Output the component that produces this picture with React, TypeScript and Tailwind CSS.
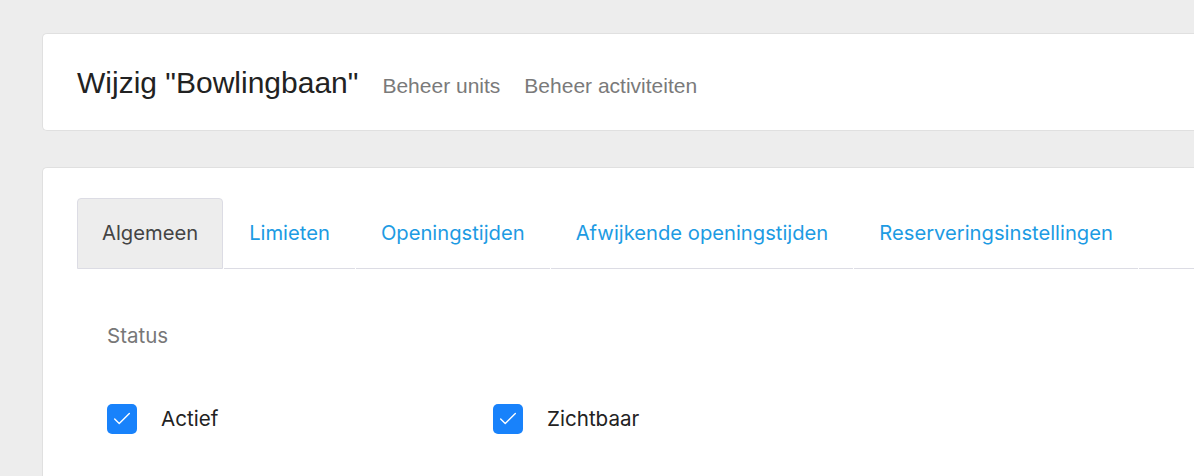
import { Check } from "lucide-react";

const TABS = [
  "Algemeen",
  "Limieten",
  "Openingstijden",
  "Afwijkende openingstijden",
  "Reserveringsinstellingen",
];

function Checkbox({ label }: { label: string }) {
  return (
    <label className="flex items-center gap-6">
      <span className="flex h-[30px] w-[30px] items-center justify-center rounded-[5px] bg-[#1882fb]">
        <Check className="h-[22px] w-[22px] text-white" strokeWidth={1.5} />
      </span>
      <span className="text-[20.6px] text-[#222]">{label}</span>
    </label>
  );
}

export default function App() {
  return (
    <div className="min-h-[476px] overflow-hidden bg-[#ededed] pl-[42px] pt-[33px] font-['Inter',sans-serif]">
      <div className="-mr-4 flex h-[98px] items-center rounded-l-[5px] border border-r-0 border-[#e0e0e0] bg-white pl-[34px] font-['Liberation_Sans',Arial,sans-serif]">
        <div className="flex items-baseline gap-6 pt-[2px]">
          <h1 className="text-[30px] leading-none text-[#222]">Wijzig "Bowlingbaan"</h1>
          <a className="text-[21px] leading-none text-[#7a7a7a]">Beheer units</a>
          <a className="text-[21px] leading-none text-[#7a7a7a]">Beheer activiteiten</a>
        </div>
      </div>

      <div className="-mr-4 mt-[36px] h-[320px] rounded-l-[5px] border border-r-0 border-[#e0e0e0] bg-white pl-[34px] pt-[30px]">
        <ul className="flex gap-px">
          {TABS.map((t, i) => (
            <li
              key={t}
              className={
                i === 0
                  ? "flex h-[71px] items-center rounded-t-[4px] border border-[#dcdce4] bg-[#ededed] px-[24px] text-[20.2px] text-[#444]"
                  : "flex h-[71px] items-center border-b border-[#dcdce4] px-[25px] text-[20.2px] text-[#1d9be3]"
              }
            >
              {t}
            </li>
          ))}
          <li className="flex-1 border-b border-[#dcdce4]" />
        </ul>

        <div className="pl-[30px] pt-[52px]">
          <div className="text-[20.5px] text-[#777]">Status</div>
          <div className="mt-[52px] flex">
            <div className="w-[386px]">
              <Checkbox label="Actief" />
            </div>
            <Checkbox label="Zichtbaar" />
          </div>
        </div>
      </div>
    </div>
  );
}
